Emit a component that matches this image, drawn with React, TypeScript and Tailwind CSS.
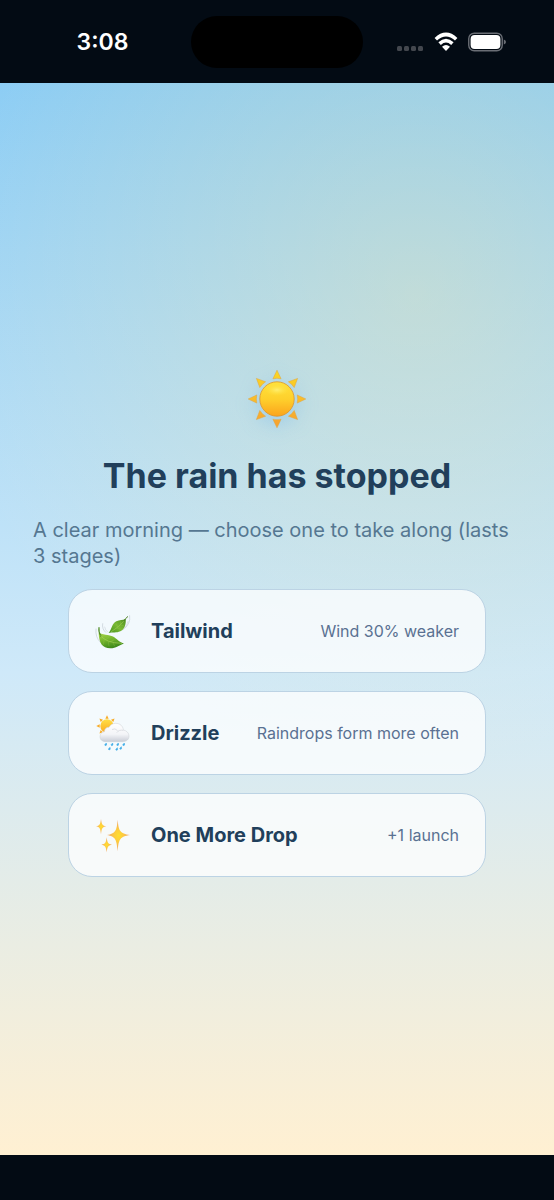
import type { ReactNode } from 'react'

interface Boon {
    id: string
    name: string
    effect: string
    icon: ReactNode
}

const RAY_ANGLES = [0, 45, 90, 135, 180, 225, 270, 315]

function SunIcon() {
    return (
        <svg viewBox="-31 -31 62 62" className="w-[62px] h-[62px] drop-shadow-[0_5px_8px_rgba(90,170,235,0.3)]" aria-hidden="true">
            <defs>
                <linearGradient id="sunDisc" x1="0" y1="0" x2="0" y2="1">
                    <stop offset="0" stopColor="#ffe23c" />
                    <stop offset="0.5" stopColor="#fed02c" />
                    <stop offset="1" stopColor="#fba41c" />
                </linearGradient>
                <linearGradient id="sunRays" gradientUnits="userSpaceOnUse" x1="0" y1="-29" x2="0" y2="29">
                    <stop offset="0" stopColor="#fbd823" />
                    <stop offset="1" stopColor="#f6a030" />
                </linearGradient>
                <radialGradient id="sunShine">
                    <stop offset="0" stopColor="#fff27a" stopOpacity="0.85" />
                    <stop offset="1" stopColor="#ffe23c" stopOpacity="0" />
                </radialGradient>
            </defs>
            <path
                fill="url(#sunRays)"
                stroke="#e2a33c"
                strokeWidth="0.5"
                strokeLinejoin="round"
                d="M0-28.8 4.1-20.2Q0-21.2-4.1-20.2ZM0 28.8 4.1 20.2Q0 21.2-4.1 20.2ZM-28.8 0-20.2-4.1Q-21.2 0-20.2 4.1ZM28.8 0 20.2-4.1Q21.2 0 20.2 4.1ZM-20.6-20.6-11.4-17.2Q-15-15-17.2-11.4ZM20.6-20.6 11.4-17.2Q15-15 17.2-11.4ZM-20.6 20.6-11.4 17.2Q-15 15-17.2 11.4ZM20.6 20.6 11.4 17.2Q15 15 17.2 11.4Z"
            />
            <circle r="17.2" fill="url(#sunDisc)" stroke="#dd942c" strokeWidth="0.8" />
            <ellipse cy="-9" rx="12" ry="6" fill="url(#sunShine)" />
        </svg>
    )
}

function LeavesIcon() {
    return (
        <svg viewBox="0 0 108 108" className="w-9 h-9" aria-hidden="true">
            <defs>
                <linearGradient id="leafBig" x1="0" y1="0" x2="0.4" y2="1">
                    <stop offset="0" stopColor="#a9d64b" />
                    <stop offset="0.5" stopColor="#74b52c" />
                    <stop offset="1" stopColor="#3f8a1c" />
                </linearGradient>
                <linearGradient id="leafSmall" x1="1" y1="0" x2="0" y2="1">
                    <stop offset="0" stopColor="#4d8f22" />
                    <stop offset="0.5" stopColor="#79b934" />
                    <stop offset="1" stopColor="#47921f" />
                </linearGradient>
            </defs>
            <g fill="none" stroke="#c3cbd3" strokeWidth="2" strokeLinecap="round">
                <path d="M104 8Q108 34 84 50" />
                <path d="M99 26Q97 38 88 44" strokeWidth="1.5" />
                <path d="M3 48Q0 72 16 88" />
                <path d="M23 32Q20 48 32 58" />
                <path d="M29 42Q30 52 38 57" strokeWidth="1.5" />
            </g>
            <path fill="url(#leafBig)" d="M11 60C26 66 38 64 52 70C66 76 74 90 87 91C72 98 64 106 46 106C22 106 12 90 11 60Z" />
            <path fill="none" stroke="#4c8a20" strokeWidth="3.5" strokeLinecap="round" d="M12 44Q10 58 18 70" />
            <path fill="none" stroke="#a9d35c" strokeWidth="1.8" strokeLinecap="round" d="M17 68Q32 90 80 91" />
            <path fill="none" stroke="#97c748" strokeWidth="1" d="M28 80 25 95M40 86 42 100M54 90 59 99M30 81 42 73M44 87 58 80" />
            <path fill="url(#leafSmall)" d="M41 60C52 46 50 32 64 25C74 20 83 22 92 17C94 34 88 49 76 55C64 61 54 56 41 60Z" />
            <path fill="none" stroke="#4c7f22" strokeWidth="3" strokeLinecap="round" d="M98 11Q90 17 86 25" />
            <path fill="none" stroke="#a9d35c" strokeWidth="1.6" strokeLinecap="round" d="M86 25Q72 42 49 56" />
            <path fill="none" stroke="#97c748" strokeWidth="1" d="M77 34V25M68 43 64 32M76 36 86 38M66 45 77 49" />
        </svg>
    )
}

function DrizzleIcon() {
    return (
        <svg viewBox="0 0 108 108" className="w-9 h-9" aria-hidden="true">
            <defs>
                <linearGradient id="smallSun" x1="0" y1="0" x2="0" y2="1">
                    <stop offset="0" stopColor="#ffdf45" />
                    <stop offset="1" stopColor="#fba921" />
                </linearGradient>
                <linearGradient id="cloud" x1="0" y1="0" x2="0" y2="1">
                    <stop offset="0" stopColor="#ffffff" />
                    <stop offset="0.6" stopColor="#f3f4f7" />
                    <stop offset="1" stopColor="#c9cdd6" />
                </linearGradient>
            </defs>
            <g transform="translate(36 33)" fill="#f8ac27">
                {RAY_ANGLES.map(angle => (
                    <path key={angle} d="M0-32 5-22H-5Z" transform={`rotate(${angle})`} />
                ))}
                <circle r="20" fill="url(#smallSun)" />
            </g>
            <path
                fill="url(#cloud)"
                stroke="#cdd1d8"
                strokeWidth="1.6"
                d="M34 80C22 80 15 74 15 65C15 57 20 51 28 50C29 41 35 36 42 37C46 29 54 25 62 25C75 25 84 33 85 45C95 47 102 54 102 63C102 74 94 80 82 80Z"
            />
            <path fill="none" stroke="#d0d3da" strokeWidth="2" strokeLinecap="round" d="M52 43Q60 38 67 46M66 52Q72 43 84 46" />
            <g fill="#42aee8" stroke="#42aee8" strokeWidth="1.6" strokeLinejoin="round">
                <path d="M34 84Q37 92 31 92Q26 90 34 84Z" />
                <path d="M53 84Q56 92 50 92Q45 90 53 84Z" />
                <path d="M70 84Q73 92 67 92Q62 90 70 84Z" />
                <path d="M88 84Q91 92 85 92Q80 90 88 84Z" />
                <path d="M45 97Q48 105 42 105Q37 103 45 97Z" />
                <path d="M67 98Q70 106 64 106Q59 104 67 98Z" />
                <path d="M79 95Q82 103 76 103Q71 101 79 95Z" />
            </g>
        </svg>
    )
}

function SparklesIcon() {
    return (
        <svg viewBox="0 0 108 108" className="w-9 h-9" aria-hidden="true">
            <defs>
                <radialGradient id="spark">
                    <stop offset="0" stopColor="#ffdf2e" />
                    <stop offset="0.4" stopColor="#fdcb40" />
                    <stop offset="1" stopColor="#eda070" />
                </radialGradient>
            </defs>
            <g fill="url(#spark)">
                <path d="M68 8C71 42 75 49 105 54C75 59 71 66 68 103C65 66 61 59 36 54C61 49 65 42 68 8Z" />
                <path d="M18 6C20 22 22 26 34 28C22 30 20 34 18 52C16 34 14 30 3 28C14 26 16 22 18 6Z" />
                <path d="M35 61C37 77 39 81 51 83C39 85 37 89 35 106C33 89 31 85 19 83C31 81 33 77 35 61Z" />
            </g>
        </svg>
    )
}

const boons: Boon[] = [
    { id: 'tailwind', name: 'Tailwind', effect: 'Wind 30% weaker', icon: <LeavesIcon /> },
    { id: 'drizzle', name: 'Drizzle', effect: 'Raindrops form more often', icon: <DrizzleIcon /> },
    { id: 'drop', name: 'One More Drop', effect: '+1 launch', icon: <SparklesIcon /> },
]

function StatusBar() {
    return (
        <header className="grid grid-cols-[1fr_172px_1fr] items-center h-[83px] shrink-0 text-white">
            <div className="pl-3.5 text-center text-[23px] leading-8 font-semibold">3:08</div>
            <div className="h-[52px] rounded-full bg-black" />
            <div className="flex items-center justify-center gap-[10px] pr-3.5">
                <svg viewBox="0 0 27 20" className="w-[27px] h-5" fill="#43474e" aria-hidden="true">
                    <rect x="0" y="14" width="5" height="5" rx="1.5" />
                    <rect x="7" y="14" width="5" height="5" rx="1.5" />
                    <rect x="14" y="14" width="5" height="5" rx="1.5" />
                    <rect x="21" y="14" width="5" height="5" rx="1.5" />
                </svg>
                <svg viewBox="0 0 24 20" className="w-6 h-5" fill="none" stroke="#fff" strokeWidth="3.6" aria-hidden="true">
                    <path d="M1.8 7.2Q12-2.2 22.2 7.2" />
                    <path d="M5.6 11.6Q12 5.6 18.4 11.6" />
                    <path d="M12 19 8 14.8Q12 11.4 16 14.8Z" fill="#fff" stroke="none" />
                </svg>
                <svg viewBox="0 0 38 20" className="w-[38px] h-5" aria-hidden="true">
                    <rect x="0.75" y="1.25" width="33.5" height="17.5" rx="5.5" fill="none" stroke="#6a6e75" strokeWidth="1.4" />
                    <rect x="2.6" y="3.1" width="29.8" height="13.8" rx="4" fill="#fff" />
                    <path d="M35.8 7.4Q38 8.2 38 10T35.8 12.6Z" fill="#6a6e75" />
                </svg>
            </div>
        </header>
    )
}

export default function App() {
    return (
        <div className="min-h-screen flex flex-col bg-[#030b14] font-['Inter',sans-serif]">
            <StatusBar />

            <main className="flex-1 flex flex-col items-center justify-center px-[33px] bg-[radial-gradient(circle_at_75%_20%,rgba(255,230,155,0.32),rgba(255,230,155,0)_50%),linear-gradient(180deg,#8ccdf5_0%,#cfe9f9_55%,#fff0d2_100%)]">
                <div className="h-[76px] flex items-center justify-center">
                    <SunIcon />
                </div>

                <h1 className="mt-[18px] text-[34px] leading-[42px] font-bold text-[#213f5b]">The rain has stopped</h1>

                <p className="mt-5 w-full text-xl leading-[26px] text-[#557791]">
                    A clear morning — choose one to take along (lasts 3 stages)
                </p>

                <div className="mt-5 w-full max-w-[418px] flex flex-col gap-[18px]">
                    {boons.map(boon => (
                        <button
                            key={boon.id}
                            type="button"
                            className="h-[84px] w-full flex items-center gap-5 px-[26px] rounded-[24px] border border-[#bcd3e4] bg-white/75 hover:bg-white/90"
                        >
                            {boon.icon}
                            <span className="text-xl font-bold text-[#213f5b]">{boon.name}</span>
                            <span className="ml-auto text-base text-[#5a7192]">{boon.effect}</span>
                        </button>
                    ))}
                </div>
            </main>

            <footer className="h-[45px] shrink-0" />
        </div>
    )
}
